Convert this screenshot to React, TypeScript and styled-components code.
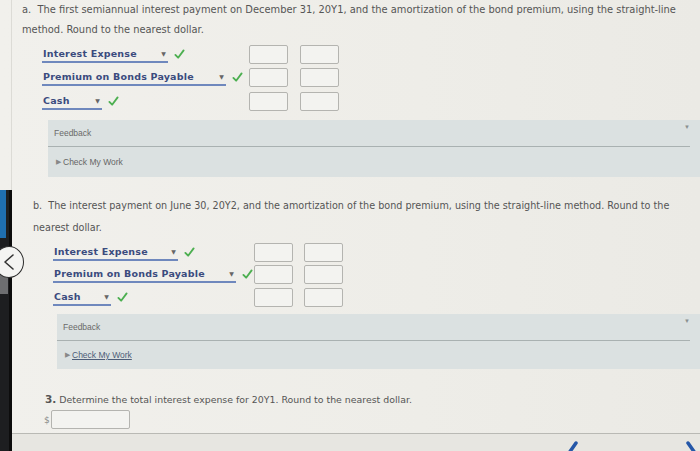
import React from 'react'
import { createGlobalStyle, styled } from 'styled-components'

const GlobalStyle = createGlobalStyle`
  html, body {
    margin: 0;
    padding: 0;
    background: #eeede8;
  }
  body {
    width: 700px;
    height: 451px;
    overflow: hidden;
    font-family: 'DejaVu Sans', Verdana, sans-serif;
  }
`

const Page = styled.div`
  position: relative;
  display: flex;
  width: 700px;
  height: 451px;
  background: linear-gradient(90deg, #f1f0ec 0%, #eeede8 60%, #ebeae5 100%);
`

const LeftRail = styled.div`
  display: flex;
  flex-direction: column;
  width: 12px;
  flex-shrink: 0;
`

const RailTop = styled.div`
  height: 190px;
  border-right: 1px solid #dcdbd6;
`

const RailDark = styled.div`
  flex: 1;
  background: #1d1e20;
  border-right: 3px solid #0c0c0c;
  display: flex;
  flex-direction: column;
`

const RailBlue = styled.div`
  height: 48px;
  width: 6px;
  background: #1f6fb0;
`

const RailGrey = styled.div`
  height: 22px;
  width: 8px;
  margin-top: 34px;
  background: #6d6e70;
`

const NavCircle = styled.div`
  position: absolute;
  left: -6px;
  top: 246px;
  width: 28px;
  height: 30px;
  border-radius: 50%;
  background: #f4f4f2;
  border: 1.5px solid #2a2a2a;
  display: flex;
  align-items: center;
  justify-content: center;
`

const Content = styled.div`
  flex: 1;
  display: flex;
  flex-direction: column;
  min-width: 0;
`

const Section = styled.div<{ $indent: number }>`
  padding-left: ${(p) => p.$indent}px;
`

const Question = styled.p<{ $lh: number; $size: number; $top: number }>`
  margin: ${(p) => p.$top}px 0 0;
  font-size: ${(p) => p.$size}px;
  line-height: ${(p) => p.$lh}px;
  color: #555;
  padding-right: 12px;
`

const Rows = styled.div<{ $top: number; $left: number; $gap: number }>`
  display: flex;
  flex-direction: column;
  row-gap: ${(p) => p.$gap}px;
  margin-top: ${(p) => p.$top}px;
  padding-left: ${(p) => p.$left}px;
`

const Row = styled.div`
  display: flex;
  align-items: center;
  height: 18px;
`

const AccountCell = styled.div<{ $w: number }>`
  width: ${(p) => p.$w}px;
  display: flex;
  align-items: center;
  column-gap: 6px;
`

const Select = styled.div<{ $w: number }>`
  width: ${(p) => p.$w}px;
  display: flex;
  align-items: center;
  justify-content: space-between;
  border-bottom: 2px solid #6f88bd;
  padding: 0 2px 0 1px;
  height: 15px;
  font-weight: bold;
  font-size: 9.5px;
  color: #3b4b7e;
  letter-spacing: 0.2px;
`

const Caret = styled.span`
  font-size: 6px;
  color: #666;
`

const Boxes = styled.div<{ $gap: number }>`
  display: flex;
  column-gap: ${(p) => p.$gap}px;
`

const AmountBox = styled.div`
  width: 37px;
  height: 17px;
  border: 1px solid #b4b4b0;
  border-radius: 2px;
  background: #f3f3f0;
`

const FeedbackPanel = styled.div<{ $top: number; $left: number; $h: number }>`
  margin-top: ${(p) => p.$top}px;
  margin-left: ${(p) => p.$left}px;
  background: #dbe1e1;
  height: ${(p) => p.$h}px;
  display: flex;
  flex-direction: column;
`

const FeedbackHead = styled.div`
  height: 26px;
  flex-shrink: 0;
  display: flex;
  align-items: center;
  justify-content: space-between;
  margin-right: 10px;
  padding-left: 6px;
  border-bottom: 1px solid #a9b1b1;
  font-family: 'Liberation Sans', Arial, sans-serif;
  font-size: 8.5px;
  color: #6a6a6a;
`

const Toggle = styled.span`
  font-size: 6px;
  color: #8a9090;
  margin-top: -12px;
`

const CheckWork = styled.div<{ $link: boolean }>`
  flex: 1;
  display: flex;
  align-items: center;
  padding-left: 8px;
  font-family: 'Liberation Sans', Arial, sans-serif;
  font-size: 8.5px;
  color: ${(p) => (p.$link ? '#4d5d78' : '#666')};

  span {
    text-decoration: ${(p) => (p.$link ? 'underline' : 'none')};
    margin-left: 2px;
  }
`

const Arrow = styled.i`
  font-style: normal;
  font-size: 7px;
  color: #888;
`

const Num = styled.span`
  font-weight: bold;
  font-size: 10.5px;
  color: #555;
`

const DollarRow = styled.div`
  display: flex;
  align-items: center;
  margin-top: 1px;
  padding-left: 32px;
  font-size: 9px;
  color: #888;
`

const DollarBox = styled.div`
  width: 77px;
  height: 17px;
  border: 1px solid #b4b4b0;
  border-radius: 2px;
  background: #f3f3f0;
  margin-left: 1px;
`

const Footer = styled.div`
  margin-top: 4px;
  flex: 1;
  border-top: 1px solid #b9b9b4;
  background: #e7e6e1;
  display: flex;
  justify-content: flex-end;
  align-items: flex-end;
  column-gap: 106px;
  padding-right: 1px;
  overflow: hidden;
`

const Check = () => (
  <svg width="11" height="11" viewBox="0 0 12 12">
    <path d="M1.5 6.5 L4.5 9.5 L10.5 1.5" fill="none" stroke="#4caf50" strokeWidth="2" strokeLinecap="round" strokeLinejoin="round" />
  </svg>
)

const Chevron = ({ dir }: { dir: 'l' | 'r' }) => (
  <svg width="14" height="10" viewBox="0 0 14 10">
    <path
      d={dir === 'l' ? 'M11 2 L4 12' : 'M3 2 L10 12'}
      fill="none"
      stroke="#2557a8"
      strokeWidth="3.5"
      strokeLinecap="round"
    />
  </svg>
)

type Entry = { name: string; w: number }

const Journal = ({
  entries,
  top,
  left,
  cell,
  gap,
  boxGap,
}: {
  entries: Entry[]
  top: number
  left: number
  cell: number
  gap: number
  boxGap: number
}) => (
  <Rows $top={top} $left={left} $gap={gap}>
    {entries.map((e) => (
      <Row key={e.name}>
        <AccountCell $w={cell}>
          <Select $w={e.w}>
            <span>{e.name}</span>
            <Caret>▼</Caret>
          </Select>
          <Check />
        </AccountCell>
        <Boxes $gap={boxGap}>
          <AmountBox />
          <AmountBox />
        </Boxes>
      </Row>
    ))}
  </Rows>
)

const Feedback = ({ top, left, h, link }: { top: number; left: number; h: number; link: boolean }) => (
  <FeedbackPanel $top={top} $left={left} $h={h}>
    <FeedbackHead>
      Feedback
      <Toggle>▼</Toggle>
    </FeedbackHead>
    <CheckWork $link={link}>
      <Arrow>▶</Arrow>
      <span>Check My Work</span>
    </CheckWork>
  </FeedbackPanel>
)

export default function App() {
  return (
    <>
      <GlobalStyle />
      <Page>
        <LeftRail>
          <RailTop />
          <RailDark>
            <RailBlue />
            <RailGrey />
          </RailDark>
        </LeftRail>
        <NavCircle>
          <svg width="14" height="16" viewBox="0 0 14 16">
            <path d="M11 1 L3 8 L11 15" fill="none" stroke="#333" strokeWidth="1.6" strokeLinecap="round" strokeLinejoin="round" />
          </svg>
        </NavCircle>
        <Content>
          <Section $indent={10}>
            <Question $lh={20} $size={9.9} $top={0}>
              a.&nbsp; The first semiannual interest payment on December 31, 20Y1, and the amortization of the bond premium, using the straight-line method. Round to the nearest dollar.
            </Question>
            <Journal
              top={5}
              left={20}
              cell={207}
              gap={5.5}
              boxGap={12}
              entries={[
                { name: 'Interest Expense', w: 123 },
                { name: 'Premium on Bonds Payable', w: 181 },
                { name: 'Cash', w: 57 },
              ]}
            />
          </Section>
          <Feedback top={10} left={36} h={57} link={false} />
          <Section $indent={21}>
            <Question $lh={22} $size={9.65} $top={18}>
              b.&nbsp; The interest payment on June 30, 20Y2, and the amortization of the bond premium, using the straight-line method. Round to the nearest dollar.
            </Question>
            <Journal
              top={4}
              left={20}
              cell={201}
              gap={4.5}
              boxGap={11}
              entries={[
                { name: 'Interest Expense', w: 122 },
                { name: 'Premium on Bonds Payable', w: 180 },
                { name: 'Cash', w: 55 },
              ]}
            />
          </Section>
          <Feedback top={8} left={45} h={55} link={true} />
          <Section $indent={33}>
            <Question $lh={18} $size={9.4} $top={21}>
              <Num>3.</Num> Determine the total interest expense for 20Y1. Round to the nearest dollar.
            </Question>
          </Section>
          <DollarRow>
            $<DollarBox />
          </DollarRow>
          <Footer>
            <Chevron dir="l" />
            <Chevron dir="r" />
          </Footer>
        </Content>
      </Page>
    </>
  )
}
